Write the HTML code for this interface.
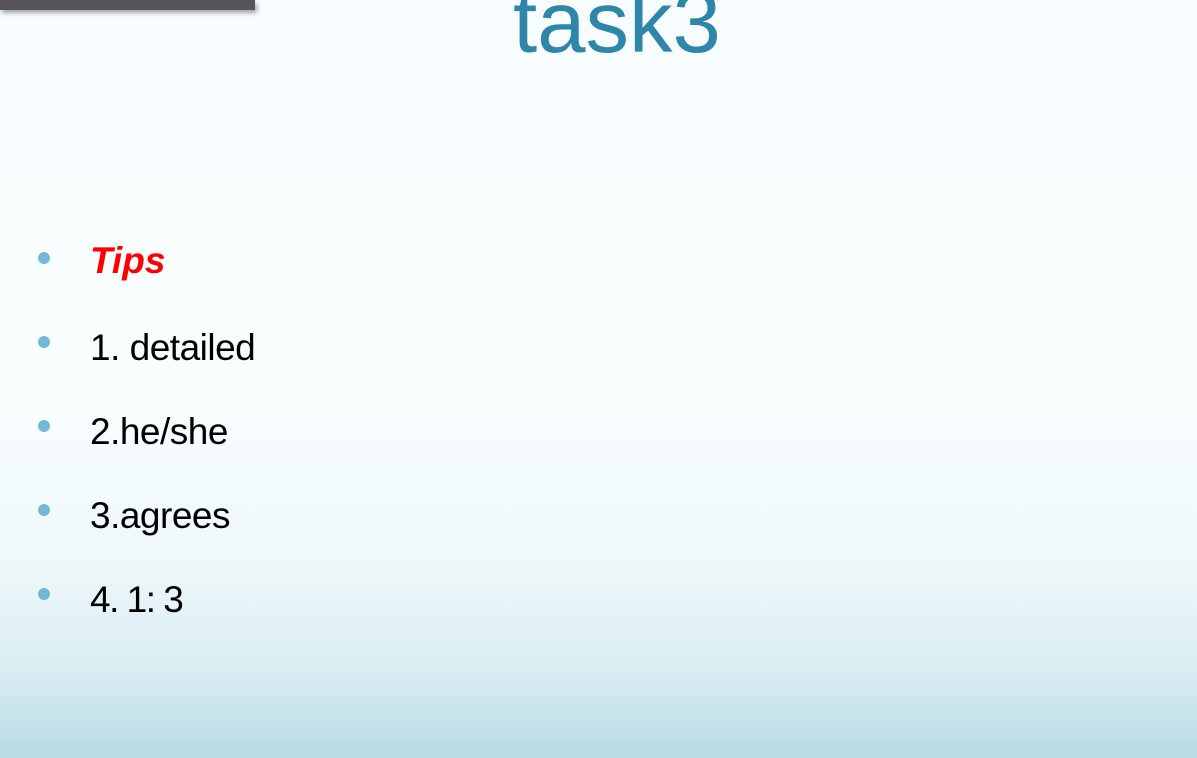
<!DOCTYPE html>
<html><head><style>
html,body{margin:0;padding:0}
body{width:1197px;height:758px;overflow:hidden;position:relative;font-family:"Liberation Sans",Arial,sans-serif;
background:linear-gradient(180deg,#f7fdfe 0%,#f8fdfe 55%,#eef7fa 75%,#d9edf2 88%,#b9dbe5 100%);}
.bar{position:absolute;left:0;top:0;width:255px;height:10px;background:#55545c;box-shadow:2px 3px 5px rgba(0,0,0,.35)}
.title{position:absolute;left:513px;top:-21px;font-size:87px;color:#2e86a8;line-height:1;}
.b{position:absolute;left:38px;width:12px;height:12px;border-radius:50%;background:#74b8d8}
.t{position:absolute;left:90px;font-size:37px;line-height:1;color:#000;white-space:nowrap;letter-spacing:-0.5px}
</style></head><body>
<div class="bar"></div>
<div class="title">task3</div>
<div class="b" style="top:252px"></div><div class="t" style="top:242px;color:#f00;font-style:italic;font-weight:bold;font-size:37px;letter-spacing:0">Tips</div>
<div class="b" style="top:336px"></div><div class="t" style="top:329px">1. detailed</div>
<div class="b" style="top:420px"></div><div class="t" style="top:413px">2.he/she</div>
<div class="b" style="top:504px"></div><div class="t" style="top:497px">3.agrees</div>
<div class="b" style="top:588px"></div><div class="t" style="top:581px;letter-spacing:-1.5px">4. 1: 3</div>
</body></html>
